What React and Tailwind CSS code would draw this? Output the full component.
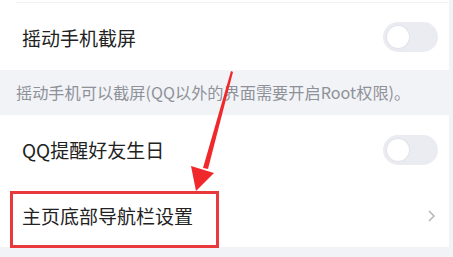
import React from "react";

const font = { fontFamily: '"Noto Sans CJK SC", "Noto Sans", sans-serif' };

function Toggle() {
  return (
    <div className="w-[55px] h-[30px] rounded-full bg-[#eaecf2] flex items-center px-[4px]">
      <div className="w-[22px] h-[22px] rounded-full bg-white shadow-[0_0_2px_rgba(0,0,0,0.12)]" />
    </div>
  );
}

function Row({ title, height, right }) {
  return (
    <div
      className="flex items-center justify-between bg-white pl-[22px] pr-[11px]"
      style={{ height }}
    >
      <span className="text-[19px] text-[#222] leading-none">{title}</span>
      {right}
    </div>
  );
}

export default function App() {
  return (
    <div className="relative w-[453px] h-[257px] overflow-hidden bg-[#f2f3f7] flex" style={font}>
      <div className="w-[449px] flex flex-col">
        {/* top divider */}
        <div className="bg-white h-[4px] pt-[2px] pl-[16px]">
          <div className="h-px bg-[#f1f2f4]" />
        </div>

        <Row title="摇动手机截屏" height={66} right={<Toggle />} />

        {/* description */}
        <div className="h-[45px] flex items-center pl-[16px] bg-[#f2f3f7]">
          <span className="text-[16.2px] text-[#8e9298] leading-none whitespace-nowrap">
            摇动手机可以截屏(QQ以外的界面需要开启Root权限)。
          </span>
        </div>

        <Row title="QQ提醒好友生日" height={69} right={<Toggle />} />

        <Row
          title="主页底部导航栏设置"
          height={63}
          right={
            <svg width="9" height="14" viewBox="0 0 9 14" className="mr-[2px]">
              <path d="M2 2 L7 7 L2 12" fill="none" stroke="#b4b6bb" strokeWidth="1.5" />
            </svg>
          }
        />
      </div>

      {/* annotation: red box */}
      <div className="absolute left-[10px] top-[191px] w-[209px] h-[57px] border-[3px] border-[#e8393b]" />

      {/* annotation: arrow */}
      <svg className="absolute left-0 top-0" width="453" height="257" viewBox="0 0 453 257">
        <polygon points="231,71 233,72 208,169 203,168" fill="#f0282c" />
        <polygon points="191,166 214,173 196,191" fill="#f0282c" />
      </svg>
    </div>
  );
}
